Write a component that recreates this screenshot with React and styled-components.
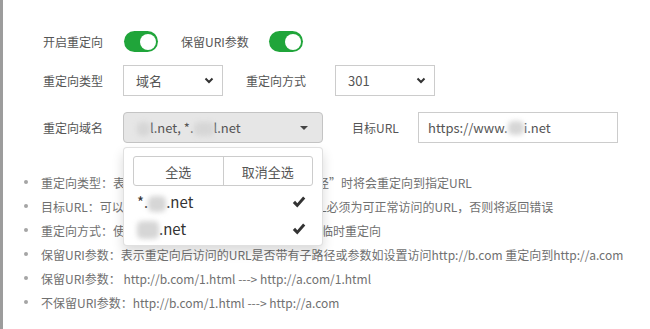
import styled, { createGlobalStyle } from "styled-components";

const GlobalStyle = createGlobalStyle`
  body {
    margin: 0;
    background: #fff;
    font-family: "Noto Sans CJK SC", "Noto Sans", sans-serif;
  }
`;

const Page = styled.div`
  width: 650px;
  height: 329px;
  box-sizing: border-box;
  border-left: 3px solid #9c9c9c;
  padding-top: 26px;
  overflow: hidden;
`;

const Form = styled.div`
  padding-left: 40px;
`;

const Row = styled.div`
  display: flex;
  align-items: center;
  height: 31px;
  margin-bottom: ${(p) => p.$mb || 0}px;
`;

const Label = styled.span`
  flex-shrink: 0;
  width: ${(p) => p.$w}px;
  margin-left: ${(p) => p.$ml || 0}px;
  font-size: 12px;
  line-height: 31px;
  color: #555;
  white-space: nowrap;
`;

const Toggle = styled.span`
  position: relative;
  flex-shrink: 0;
  width: 34px;
  height: 21px;
  border-radius: 11px;
  background: #20a53a;

  &::after {
    content: "";
    position: absolute;
    top: 2.5px;
    right: 2.5px;
    width: 16px;
    height: 16px;
    border-radius: 50%;
    background: #fff;
  }
`;

const Select = styled.div`
  box-sizing: border-box;
  flex-shrink: 0;
  width: 100px;
  height: 31px;
  border: 1px solid #ccc;
  display: flex;
  align-items: center;
  justify-content: space-between;
  padding: 0 8px 0 12px;
  font-size: 13px;
  color: #555;
`;

const MultiWrap = styled.div`
  position: relative;
  flex-shrink: 0;
  width: 200px;
`;

const MultiButton = styled.div`
  box-sizing: border-box;
  height: 31px;
  background: #e6e6e6;
  border: 1px solid #c4c4c4;
  border-radius: 4px;
  display: flex;
  align-items: center;
  justify-content: space-between;
  padding: 0 14px 0 13px;
  font-size: 13px;
  color: #555;
`;

const Caret = styled.span`
  width: 0;
  height: 0;
  border-left: 4px solid transparent;
  border-right: 4px solid transparent;
  border-top: 4px solid #444;
`;

const Dropdown = styled.div`
  position: absolute;
  top: 35px;
  left: 0;
  z-index: 2;
  box-sizing: border-box;
  width: 200px;
  padding: 8px 9px 3px;
  background: #fff;
  border: 1px solid rgba(0, 0, 0, 0.12);
  border-radius: 4px;
  box-shadow: 0 6px 12px rgba(0, 0, 0, 0.15);
`;

const BtnGroup = styled.div`
  display: flex;
  height: 30px;
  box-sizing: border-box;
  border: 1px solid #ccc;
  border-radius: 3px;
  margin-bottom: 2px;
`;

const GroupBtn = styled.div`
  flex: 1;
  display: flex;
  align-items: center;
  justify-content: center;
  font-size: 13px;
  color: #555;

  & + & {
    border-left: 1px solid #ccc;
  }
`;

const Item = styled.div`
  height: 27px;
  display: flex;
  align-items: center;
  justify-content: space-between;
  padding: 0 7px 0 4px;
  font-size: 15px;
  color: #333;
`;

const Blob = styled.span`
  display: inline-block;
  width: ${(p) => p.$w}px;
  height: ${(p) => p.$h || 14}px;
  vertical-align: middle;
  background: #d6d6d6;
  border-radius: 5px;
  filter: blur(2.5px);
`;

const TextInput = styled.div`
  box-sizing: border-box;
  flex-shrink: 0;
  width: 200px;
  height: 31px;
  border: 1px solid #ccc;
  display: flex;
  align-items: center;
  padding-left: 9px;
  font-size: 13px;
  color: #555;
`;

const Notes = styled.ul`
  list-style: none;
  margin: 27px 0 0;
  padding: 0 0 0 21px;
`;

const Note = styled.li`
  display: flex;
  align-items: center;
  height: 24px;
  font-size: 12px;
  color: #707070;
  white-space: nowrap;

  &::before {
    content: "";
    flex-shrink: 0;
    width: 4px;
    height: 4px;
    border-radius: 50%;
    background: #a5a5a5;
    margin-right: 13px;
  }
`;

const Chevron = () => (
  <svg width="10" height="7" viewBox="0 0 10 7">
    <path d="M1.5 1.5 L5 5 L8.5 1.5" fill="none" stroke="#333" strokeWidth="2" />
  </svg>
);

const Check = () => (
  <svg width="14" height="12" viewBox="0 0 13 12">
    <path d="M0.3 7 L2.6 4.8 L4.8 7.2 L10.6 0.6 L12.8 2.6 L4.8 11.4 Z" fill="#333" />
  </svg>
);

const notes = [
  "重定向类型：表示访问选择的“域名”或输入的“路径”时将会重定向到指定URL",
  "目标URL：可以填写你需要重定向到的站点，目标URL必须为可正常访问的URL，否则将返回错误",
  "重定向方式：使用301表示永久重定向，使用302表示临时重定向",
  "保留URI参数：表示重定向后访问的URL是否带有子路径或参数如设置访问http://b.com 重定向到http://a.com",
  "保留URI参数：  http://b.com/1.html ---> http://a.com/1.html",
  "不保留URI参数：http://b.com/1.html ---> http://a.com",
];

export default function App() {
  return (
    <Page>
      <GlobalStyle />
      <Form>
        <Row $mb={8}>
          <Label $w={81}>开启重定向</Label>
          <Toggle />
          <Label $w={88} $ml={23}>保留URI参数</Label>
          <Toggle />
        </Row>
        <Row $mb={16}>
          <Label $w={80}>重定向类型</Label>
          <Select>
            域名
            <Chevron />
          </Select>
          <Label $w={89} $ml={23}>重定向方式</Label>
          <Select>
            301
            <Chevron />
          </Select>
        </Row>
        <Row>
          <Label $w={80}>重定向域名</Label>
          <MultiWrap>
            <MultiButton>
              <span>
                <Blob $w={13} />l.net, *.<Blob $w={20} />l.net
              </span>
              <Caret />
            </MultiButton>
            <Dropdown>
              <BtnGroup>
                <GroupBtn>全选</GroupBtn>
                <GroupBtn>取消全选</GroupBtn>
              </BtnGroup>
              <Item>
                <span>
                  *.<Blob $w={18} $h={16} />.net
                </span>
                <Check />
              </Item>
              <Item>
                <span>
                  <Blob $w={22} $h={18} />.net
                </span>
                <Check />
              </Item>
            </Dropdown>
          </MultiWrap>
          <Label $w={66} $ml={29}>目标URL</Label>
          <TextInput>
            https://www.<Blob $w={16} />i.net
          </TextInput>
        </Row>
      </Form>
      <Notes>
        {notes.map((n) => (
          <Note key={n}>{n}</Note>
        ))}
      </Notes>
    </Page>
  );
}
